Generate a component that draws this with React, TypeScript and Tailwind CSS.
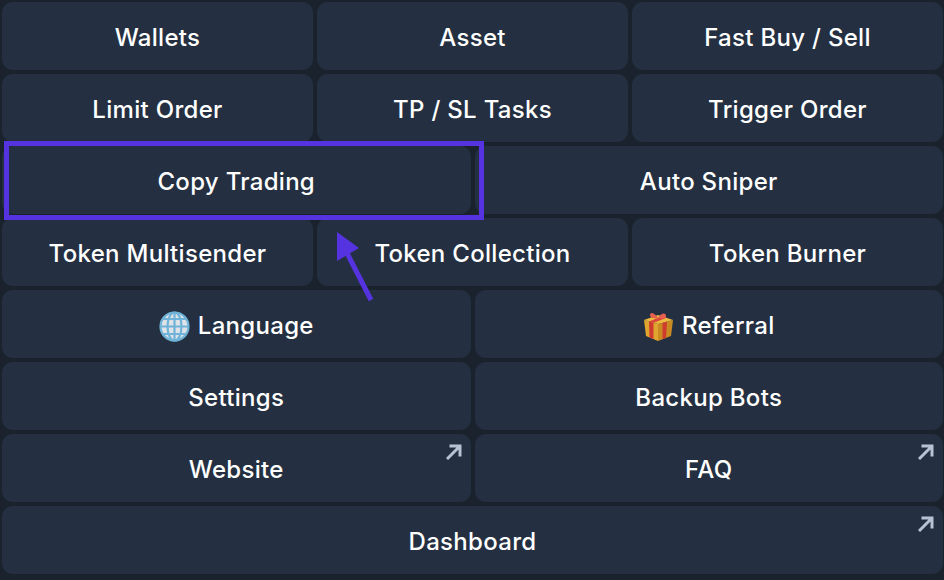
const ROWS: Array<Array<{ label: string; icon?: "globe" | "gift"; link?: boolean }>> = [
  [{ label: "Wallets" }, { label: "Asset" }, { label: "Fast Buy / Sell" }],
  [{ label: "Limit Order" }, { label: "TP / SL Tasks" }, { label: "Trigger Order" }],
  [{ label: "Copy Trading" }, { label: "Auto Sniper" }],
  [{ label: "Token Multisender" }, { label: "Token Collection" }, { label: "Token Burner" }],
  [{ label: "Language", icon: "globe" }, { label: "Referral", icon: "gift" }],
  [{ label: "Settings" }, { label: "Backup Bots" }],
  [{ label: "Website", link: true }, { label: "FAQ", link: true }],
  [{ label: "Dashboard", link: true }],
];

function Globe() {
  return (
    <svg width="31" height="31" viewBox="0 0 31 31" className="mr-[8px]">
      <circle cx="15.5" cy="15.5" r="14.5" fill="#dfe3e8" />
      <g fill="none" stroke="#6fb3d8" strokeWidth="2.2">
        <circle cx="15.5" cy="15.5" r="14" />
        <ellipse cx="15.5" cy="15.5" rx="7" ry="14" />
        <path d="M15.5 1.5v28M1.5 15.5h28M4 8h23M4 23h23" />
      </g>
    </svg>
  );
}

function Gift() {
  return (
    <svg width="31" height="31" viewBox="0 0 31 31" className="mr-[8px]">
      <path d="M1 9l14 4v17L3 25z" fill="#e0a52e" />
      <path d="M15 13l15-4-2 16-13 5z" fill="#c98a22" />
      <path d="M1 9L15 4l15 5-15 4z" fill="#eeb93f" />
      <path d="M6 10.500l4.500 1.300V28l-4-1.500zM19.500 12l4.500-1.300-1 16-3.500 1.400z" fill="#cf3b2f" />
      <path d="M6 10.500L20 5l4 1.500-13 5.300z" fill="#d9483a" />
      <path d="M15 7C11 1 7 1 7 4c0 3 5 4 8 3zM15 7c4-6 8-5 8-2 0 3-5 3-8 2z" fill="#e8604f" />
    </svg>
  );
}

function LinkArrow() {
  return (
    <svg width="16" height="16" viewBox="0 0 16 16" className="absolute right-[9px] top-[10px]">
      <path d="M1 15L13 3M3.500 2H14v10.500" fill="none" stroke="#b7c2d4" strokeWidth="3" />
    </svg>
  );
}

export default function App() {
  return (
    <div className="relative h-[580px] w-[944px] overflow-hidden bg-[#1a232d] font-['Inter',sans-serif]">
      <div className="flex flex-col gap-[4px] pl-[2px] pr-[1px] pt-[2px]">
        {ROWS.map((row, i) => (
          <div key={i} className="flex gap-[4px]">
            {row.map((b) => (
              <div
                key={b.label}
                className="relative flex h-[68px] flex-1 items-center justify-center rounded-[11px] bg-[#243041] pt-[4px] text-[24px] font-medium tracking-[0.3px] text-white"
              >
                {b.icon === "globe" ? <Globe /> : null}
                {b.icon === "gift" ? <Gift /> : null}
                {b.label}
                {b.link ? <LinkArrow /> : null}
              </div>
            ))}
          </div>
        ))}
      </div>

      <div className="absolute left-[4px] top-[141px] h-[79px] w-[480px] border-[5px] border-[#5633e0]" />
      <svg width="50" height="80" viewBox="0 0 50 80" className="absolute left-[330px] top-[230px]">
        <path d="M7 2L29 18 7 31z" fill="#5633e0" />
        <path d="M17 23L41 70" fill="none" stroke="#5633e0" strokeWidth="5" />
      </svg>
    </div>
  );
}
